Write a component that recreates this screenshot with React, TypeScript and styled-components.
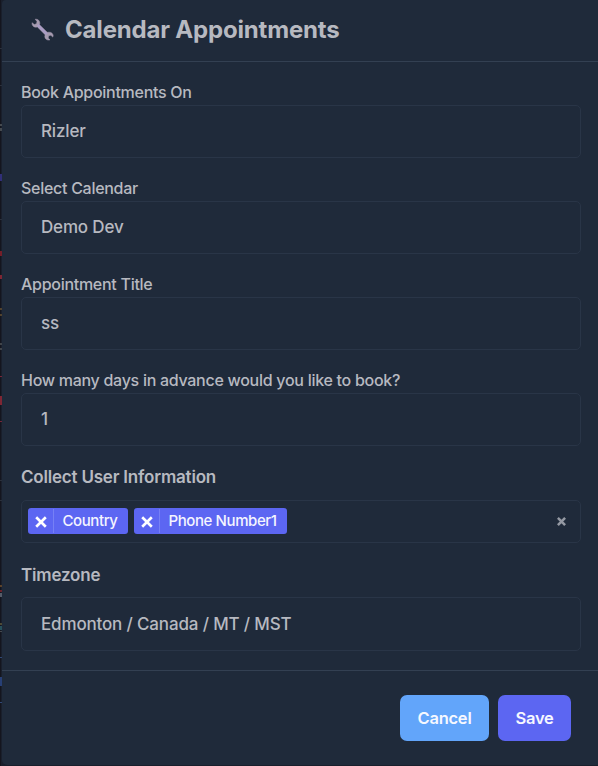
import React from "react";
import styled, { createGlobalStyle } from "styled-components";

const GlobalStyle = createGlobalStyle`
  *, *::before, *::after { box-sizing: border-box; }
  html, body { margin: 0; padding: 0; background: #14151e; overflow: hidden; }
  button, input { font: inherit; }
`;

const Backdrop = styled.div`
  position: relative;
  height: 766px;
  padding: 0 0 1px 2px;
  overflow: hidden;
  background: linear-gradient(to right, #14151e 0 1px, #191f2c 1px);
  font-family: Inter, "Liberation Sans", sans-serif;
  color: #b7b9c0;
`;

const EdgeMark = styled.i<{ $top: number; $height: number; $color: string }>`
  position: absolute;
  left: 0;
  top: ${(p) => p.$top}px;
  width: 2px;
  height: ${(p) => p.$height}px;
  background: ${(p) => p.$color};
`;

const Dialog = styled.section`
  position: relative;
  display: flex;
  flex-direction: column;
  height: 765px;
  background: #1f2a3a;
  border-radius: 4px 0 0 5px;
`;

const Header = styled.header`
  display: flex;
  align-items: center;
  height: 62px;
  padding: 0 0 2px 29px;
  border-bottom: 1px solid #334052;
`;

const Title = styled.h2`
  margin: 0 0 0 11px;
  font-size: 24px;
  line-height: 32px;
  font-weight: 700;
  letter-spacing: -0.18px;
`;

const Body = styled.div`
  display: flex;
  flex-direction: column;
  height: 608px;
  padding: 18px 17px 0 19px;
`;

const Field = styled.div`
  display: flex;
  flex-direction: column;
  margin-bottom: 18px;
`;

const Label = styled.label`
  height: 25px;
  font-size: 16px;
  line-height: 24px;
  font-weight: 500;
  letter-spacing: -0.28px;
`;

const SectionLabel = styled.label<{ $offset: number }>`
  height: 36px;
  padding-top: ${(p) => p.$offset}px;
  font-size: 17px;
  line-height: 24px;
  font-weight: 600;
  letter-spacing: -0.2px;
`;

const Input = styled.input<{ $height?: number }>`
  width: 100%;
  height: ${(p) => p.$height ?? 53}px;
  padding: 0 19px 1px;
  border: 1px solid #293547;
  border-radius: 5px;
  outline: 0;
  background: transparent;
  color: inherit;
  font-size: 17px;
  font-weight: 500;
  letter-spacing: -0.16px;
`;

const MultiSelect = styled.div`
  display: flex;
  align-items: center;
  gap: 6px;
  height: 43px;
  padding: 0 14px 1px 6px;
  border: 1px solid #293547;
  border-radius: 5px;
`;

const Tag = styled.span`
  display: flex;
  height: 26px;
  border-radius: 3px;
  background: #5c66f2;
  color: #f4f5ff;
  font-size: 15px;
  line-height: 25px;
  font-weight: 500;
  letter-spacing: -0.4px;
`;

const TagRemove = styled.span`
  display: flex;
  align-items: center;
  justify-content: center;
  width: 26px;
  margin: 1px 0;
  padding: 2px 0 0 1px;
  border-right: 1px solid #7680f5;
`;

const TagText = styled.span<{ $width: number }>`
  width: ${(p) => p.$width}px;
  padding-right: 2px;
  text-align: center;
`;

const Clear = styled.span`
  display: flex;
  margin-left: auto;
`;

const Footer = styled.footer`
  display: flex;
  flex: 1;
  justify-content: flex-end;
  gap: 9px;
  padding: 24px 27px 0 0;
  border-top: 1px solid #334052;
`;

const Button = styled.button<{ $color: string; $width: number }>`
  width: ${(p) => p.$width}px;
  height: 46px;
  padding: 0;
  border: 0;
  border-radius: 7px;
  background: ${(p) => p.$color};
  color: #f6f8ff;
  font-size: 16.5px;
  font-weight: 600;
  letter-spacing: -0.25px;
`;

const Wrench = () => (
  <svg width="23" height="24" viewBox="0 0 23 24" aria-hidden="true">
    <path
      d="M4.2 1.2C6.9 .8 9.1 2.8 8.8 5.5L8.4 6.7L16.2 14.3L18.2 14.2C20.5 14.2 22.1 15.7 22.2 17.8L21.8 19.1L19.9 17.3L17.7 17.8L17.2 20L19 21.8C16.2 22.7 13.8 21 13.8 18.4L14.1 16.7L6.4 9L4.9 9.2C2.4 9.2.8 7.2 1 4.7L3.4 6.5L5.5 5.7L6 3.5Z"
      fill="#a69bb0"
      stroke="#a69bb0"
      strokeWidth="0.5"
      strokeLinejoin="round"
    />
    <path d="M6.7 7L15.9 16.2" stroke="#aa9dc5" strokeWidth="2.6" />
  </svg>
);

const Cross = ({ size, width, color }: { size: number; width: number; color: string }) => (
  <svg width={size} height={size} viewBox="0 0 10 10" aria-hidden="true">
    <path d="M1 1L9 9M9 1L1 9" stroke={color} strokeWidth={width} />
  </svg>
);

const fields = [
  ["Book Appointments On", "Rizler"],
  ["Select Calendar", "Demo Dev"],
  ["Appointment Title", "ss"],
  ["How many days in advance would you like to book?", "1"],
];

const tags = [
  { name: "Country", width: 74 },
  { name: "Phone Number1", width: 127 },
];

const edgeMarks: [number, number, string][] = [
  [48, 1, "#2a303c"], [85, 1, "#2a303c"],
  [124, 2, "#454a50"], [128, 3, "#454a50"], [174, 7, "#312f78"],
  [219, 1, "#2a303c"], [251, 5, "#741e29"], [275, 4, "#7e2634"],
  [308, 2, "#51422e"], [314, 2, "#51422e"], [343, 2, "#40444a"],
  [348, 2, "#40444a"], [376, 1, "#76263a"], [396, 9, "#7e2634"],
  [421, 1, "#76263a"], [480, 1, "#2a303c"], [500, 1, "#2a303c"],
  [585, 2, "#5b422a"], [590, 2, "#6b222c"], [593, 4, "#545b69"],
  [623, 2, "#4d4936"], [626, 4, "#27505b"], [631, 1, "#454a50"],
  [657, 1, "#304876"], [677, 9, "#273f75"], [702, 1, "#304876"],
];

export default function App() {
  return (
    <>
      <GlobalStyle />
      <Backdrop>
        {edgeMarks.map(([top, height, color]) => (
          <EdgeMark key={top} $top={top} $height={height} $color={color} />
        ))}
        <Dialog role="dialog" aria-label="Calendar Appointments">
          <Header>
            <Wrench />
            <Title>Calendar Appointments</Title>
          </Header>
          <Body>
            {fields.map(([label, value]) => (
              <Field key={label}>
                <Label>{label}</Label>
                <Input aria-label={label} defaultValue={value} />
              </Field>
            ))}
            <Field>
              <SectionLabel $offset={1}>Collect User Information</SectionLabel>
              <MultiSelect>
                {tags.map((tag) => (
                  <Tag key={tag.name}>
                    <TagRemove><Cross size={12} width={2.2} color="#fff" /></TagRemove>
                    <TagText $width={tag.width}>{tag.name}</TagText>
                  </Tag>
                ))}
                <Clear><Cross size={9} width={2.8} color="#9499a3" /></Clear>
              </MultiSelect>
            </Field>
            <Field>
              <SectionLabel $offset={2}>Timezone</SectionLabel>
              <Input $height={54} aria-label="Timezone" defaultValue="Edmonton / Canada / MT / MST" />
            </Field>
          </Body>
          <Footer>
            <Button $color="#62a5fa" $width={89}>Cancel</Button>
            <Button $color="#5c66f2" $width={73}>Save</Button>
          </Footer>
        </Dialog>
      </Backdrop>
    </>
  );
}
